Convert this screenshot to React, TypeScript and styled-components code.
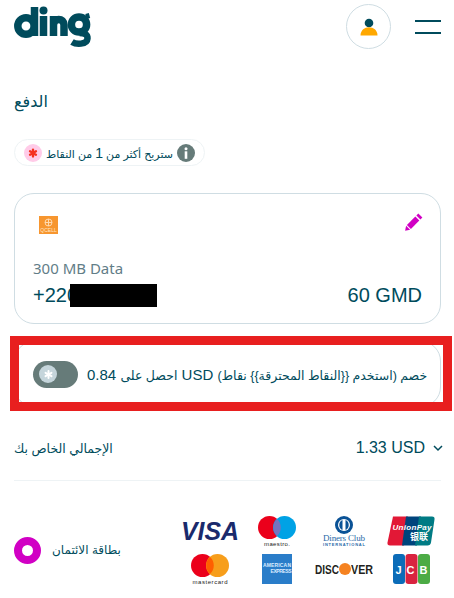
import React from 'react'
import styled, { createGlobalStyle } from 'styled-components'

const ink = '#004b5c'
const magenta = '#d100c4'

const GlobalStyle = createGlobalStyle`
  html, body {
    margin: 0;
    background: #fff;
  }
  body {
    font-family: "Liberation Sans", "DejaVu Sans", sans-serif;
    color: ${ink};
  }
`

const Page = styled.div`
  width: 454px;
  height: 598px;
  box-sizing: border-box;
  padding: 4px 13px 0 14px;
  overflow: hidden;
`

const Header = styled.header`
  height: 45px;
  display: flex;
  align-items: flex-start;
  justify-content: space-between;
`

const HeaderActions = styled.div`
  display: flex;
  align-items: center;
  gap: 24px;
`

const Avatar = styled.div`
  width: 45px;
  height: 45px;
  box-sizing: border-box;
  border: 1px solid #cfdde3;
  border-radius: 50%;
  display: flex;
  align-items: center;
  justify-content: center;
`

const Burger = styled.div`
  width: 26px;
  height: 14px;
  box-sizing: border-box;
  border-top: 2px solid ${ink};
  border-bottom: 2px solid ${ink};
`

const Title = styled.h1`
  margin: 42px 0 0;
  font-size: 16px;
  font-weight: 400;
  line-height: 22px;
`

const PointsPill = styled.div`
  margin-top: 26px;
  width: 191px;
  height: 27px;
  box-sizing: border-box;
  padding: 0 9px;
  border: 1px solid #eef3f5;
  border-radius: 14px;
  display: flex;
  align-items: center;
  justify-content: space-between;
  font-size: 11px;
  white-space: nowrap;

  b {
    font-weight: 400;
    font-size: 14px;
  }
`

const Order = styled.section`
  margin-top: 27px;
  height: 131px;
  box-sizing: border-box;
  padding: 20px 18px 0 18px;
  border: 1px solid #cfdde3;
  border-radius: 20px;
`

const OrderTop = styled.div`
  display: flex;
  justify-content: space-between;
  align-items: flex-start;
  padding-left: 6px;
`

const OperatorLogo = styled.div`
  width: 19px;
  height: 18px;
  margin-top: 2px;
  background: #f7962f;
  color: #ffe6c8;
  font-size: 5px;
  line-height: 5px;
  display: flex;
  flex-direction: column;
  align-items: center;
  justify-content: space-between;
  padding: 2px 0 1px;
  box-sizing: border-box;
`

const PencilSlot = styled.div`
  margin: -1px -1px 0 0;
  height: 18px;
`

const Product = styled.div`
  margin-top: 24px;
  font-family: "Noto Sans", sans-serif;
  font-size: 15px;
  line-height: 20px;
  color: #627d87;
`

const OrderBottom = styled.div`
  margin-top: 6px;
  display: flex;
  justify-content: space-between;
  align-items: center;
  font-size: 20px;
  line-height: 23px;
`

const Phone = styled.div`
  position: relative;
  width: 124px;
`

const Redaction = styled.span`
  position: absolute;
  left: 37px;
  top: 0;
  width: 87px;
  height: 23px;
  background: #000;
`

const DiscountWrap = styled.div`
  position: relative;
  margin-top: 17px;
`

const Discount = styled.div`
  height: 66px;
  box-sizing: border-box;
  padding: 0 21px 0 18px;
  border: 1px solid #cfdde3;
  border-radius: 20px;
  display: flex;
  align-items: center;
  gap: 9px;
`

const Highlight = styled.div`
  position: absolute;
  left: -4px;
  right: -11px;
  top: -5px;
  bottom: -4px;
  border: 9px solid #e81f1f;
  pointer-events: none;
`

const Toggle = styled.div`
  width: 45px;
  height: 27px;
  flex: none;
  border-radius: 14px;
  background: #667b79;
  display: flex;
  align-items: center;
  padding-left: 6px;
  box-sizing: border-box;
`

const Knob = styled.div`
  width: 18px;
  height: 18px;
  border-radius: 50%;
  background: #c5d5db;
  display: flex;
  align-items: center;
  justify-content: center;
`

const DiscountText = styled.div`
  flex: 1;
  direction: rtl;
  white-space: nowrap;
  font-size: 15px;
`

const ArabicRun = styled.span`
  font-size: 12.5px;
`

const Total = styled.div`
  margin-top: 30px;
  display: flex;
  justify-content: space-between;
  align-items: center;
  height: 22px;
  font-size: 12.5px;
`

const TotalAmount = styled.div`
  display: flex;
  align-items: center;
  gap: 8px;
  margin-right: -2px;
  font-size: 16px;
`

const Divider = styled.hr`
  margin: 21px 0 0;
  border: 0;
  border-top: 1px solid #eef3f5;
`

const Payment = styled.div`
  margin-top: 35px;
  display: flex;
  align-items: center;
  justify-content: space-between;
`

const Method = styled.div`
  display: flex;
  align-items: center;
  gap: 11px;
  font-size: 12px;
`

const Radio = styled.div`
  width: 27px;
  height: 27px;
  box-sizing: border-box;
  border: 8px solid ${magenta};
  border-radius: 50%;
`

const Brands = styled.div`
  display: grid;
  grid-template-columns: repeat(4, 60px);
  grid-auto-rows: 30px;
  column-gap: 7px;
  row-gap: 8px;
  justify-items: center;
  align-items: center;
`

const Asterisk = ({ size, color }: { size: number; color: string }) => (
  <svg width={size} height={size} viewBox="0 0 10 10">
    <g stroke={color} strokeWidth="2.2" strokeLinecap="round">
      <path d="M5 1.2v7.6" />
      <path d="M1.7 3.1l6.6 3.8" />
      <path d="M8.3 3.1L1.7 6.9" />
    </g>
  </svg>
)

const Logo = () => (
  <svg width="80" height="44" viewBox="0 0 80 44" fill="none" stroke={ink} strokeWidth="7.5">
    <circle cx="12" cy="22" r="8.2" />
    <path d="M20.500 3v29" />
    <path d="M29.500 12v20" />
    <circle cx="29.500" cy="6.500" r="4" fill={ink} stroke="none" />
    <path d="M39.500 32V12M39.500 21c0-7.500 10.500-7.500 10.500 0v11" />
    <circle cx="65" cy="20.500" r="7.600" />
    <path d="M72 12.500l3.500-1" strokeWidth="5" />
    <path d="M58 38c4 2.500 15 3 15.500-3.500c.3-4-3-5.500-8-5.500" strokeWidth="6.500" />
  </svg>
)

const PersonIcon = () => (
  <svg width="18" height="18" viewBox="0 0 18 18">
    <circle cx="9" cy="5" r="4.300" fill={ink} />
    <path d="M.5 17.500c0-11 17-11 17 0z" fill="#ffa800" />
  </svg>
)

const InfoIcon = () => (
  <svg width="18" height="18" viewBox="0 0 18 18">
    <circle cx="9" cy="9" r="9" fill="#667b79" />
    <circle cx="9" cy="4.800" r="1.500" fill="#fff" />
    <rect x="7.700" y="7.300" width="2.600" height="7.500" fill="#fff" />
  </svg>
)

const PinkDot = () => (
  <svg width="18" height="18" viewBox="0 0 18 18">
    <circle cx="9" cy="9" r="9" fill="#ffcbe8" />
    <g transform="translate(4.500 4.500) scale(.9)">
      <path d="M5 1.200v7.600M1.700 3.100l6.600 3.800M8.300 3.100L1.700 6.900" stroke="#f5311f" strokeWidth="2.600" strokeLinecap="round" />
    </g>
  </svg>
)

const Emblem = () => (
  <svg width="9" height="9" viewBox="0 0 9 9" fill="none" stroke="#ffd9ae" strokeWidth="1">
    <circle cx="4.500" cy="4.500" r="3.500" />
    <path d="M4.500 1v7M1 4.500h7" />
  </svg>
)

const Pencil = () => (
  <svg width="18" height="18" viewBox="0 0 18 18" fill={magenta}>
    <path d="M13.300.6l4.100 3.900-2 2-4-4z" />
    <path d="M10.300 3.600l4 4-8.400 8.300-4-4z" />
    <path d="M1.100 12.700l4 4-5 1.100z" />
  </svg>
)

const Chevron = () => (
  <svg width="10" height="7" viewBox="0 0 10 7" fill="none" stroke={ink} strokeWidth="1.500">
    <path d="M1 1l4 4 4-4" />
  </svg>
)

const Visa = () => (
  <svg width="60" height="22" viewBox="0 0 60 22">
    <text x="1" y="20" fontFamily="Liberation Sans" fontWeight="700" fontStyle="italic" fontSize="26" fill="#1a2a6c" textLength="58" lengthAdjust="spacingAndGlyphs">VISA</text>
  </svg>
)

const Maestro = () => (
  <svg width="38" height="30" viewBox="0 0 38 30">
    <circle cx="11.500" cy="11.500" r="11.500" fill="#eb001b" />
    <circle cx="26.500" cy="11.500" r="11.500" fill="#00a2e5" />
    <path d="M19 3a11.500 11.500 0 0 1 0 17a11.500 11.500 0 0 1 0-17z" fill="#7673c0" />
    <text x="19" y="29.500" textAnchor="middle" fontFamily="Liberation Sans" fontSize="6" fill="#222" textLength="26">maestro.</text>
  </svg>
)

const Diners = () => (
  <svg width="44" height="30" viewBox="0 0 44 30">
    <circle cx="22" cy="9" r="9" fill="#0a5296" />
    <circle cx="22" cy="9" r="6" fill="#fff" />
    <path d="M20.500 4a5.500 5.500 0 0 0 0 10zM23.500 4a5.500 5.500 0 0 1 0 10z" fill="#0a5296" />
    <text x="22" y="24.500" textAnchor="middle" fontFamily="Liberation Serif" fontSize="9" fill="#2a6aa8" textLength="42">Diners Club</text>
    <text x="22" y="29.500" textAnchor="middle" fontFamily="Liberation Sans" fontWeight="700" fontSize="4" fill="#2a6aa8" textLength="42">INTERNATIONAL</text>
  </svg>
)

const UnionPay = () => (
  <svg width="48" height="30" viewBox="0 0 48 30">
    <path d="M6 .5h15L17 29.500H3q-3 0-2.500-3z" fill="#e21836" />
    <path d="M19 .5h15l-4 29H15z" fill="#00447c" />
    <path d="M32 .5h13q3 0 2.500 3l-3.500 23q-.5 3-3.500 3H28z" fill="#007b84" />
    <text x="25" y="14" textAnchor="middle" fontFamily="Liberation Sans" fontWeight="700" fontStyle="italic" fontSize="8" fill="#fff" textLength="39">UnionPay</text>
    <text x="32" y="24" textAnchor="middle" fontFamily="Noto Sans CJK SC, sans-serif" fontWeight="700" fontSize="9" fill="#fff">银联</text>
  </svg>
)

const Mastercard = () => (
  <svg width="38" height="30" viewBox="0 0 38 30">
    <circle cx="11.500" cy="11.500" r="11.500" fill="#eb001b" />
    <circle cx="26.500" cy="11.500" r="11.500" fill="#f79e1b" />
    <path d="M19 3a11.500 11.500 0 0 1 0 17a11.500 11.500 0 0 1 0-17z" fill="#ff5f00" />
    <text x="19" y="29.500" textAnchor="middle" fontFamily="Liberation Sans" fontSize="6" fill="#222" textLength="35">mastercard</text>
  </svg>
)

const Amex = () => (
  <svg width="30" height="30" viewBox="0 0 30 30">
    <rect width="30" height="30" fill="#2a7dc9" />
    <text x="15" y="13" textAnchor="middle" fontFamily="Liberation Sans" fontWeight="700" fontSize="5" fill="#dcecff" textLength="28">AMERICAN</text>
    <text x="19" y="19" textAnchor="middle" fontFamily="Liberation Sans" fontWeight="700" fontSize="5" fill="#dcecff" textLength="21">EXPRESS</text>
  </svg>
)

const Discover = () => (
  <svg width="58" height="16" viewBox="0 0 58 16">
    <text x="0" y="13" fontFamily="Liberation Sans" fontWeight="700" fontSize="13" fill="#231f20" textLength="24" lengthAdjust="spacingAndGlyphs">DISC</text>
    <circle cx="30" cy="8" r="6" fill="#f58220" />
    <text x="36" y="13" fontFamily="Liberation Sans" fontWeight="700" fontSize="13" fill="#231f20" textLength="22" lengthAdjust="spacingAndGlyphs">VER</text>
  </svg>
)

const Jcb = () => (
  <svg width="37" height="30" viewBox="0 0 37 30">
    <rect x="0" y="0" width="12" height="30" rx="3" fill="#0b6cb8" />
    <rect x="12.500" y="0" width="12" height="30" rx="3" fill="#d9233f" />
    <rect x="25" y="0" width="12" height="30" rx="3" fill="#4cab45" />
    <text x="18.500" y="20" textAnchor="middle" fontFamily="Liberation Sans" fontWeight="700" fontSize="11" fill="#fff" textLength="32">JCB</text>
  </svg>
)

const App = () => {
  return (
    <Page>
      <GlobalStyle />
      <Header>
        <Logo />
        <HeaderActions>
          <Avatar>
            <PersonIcon />
          </Avatar>
          <Burger />
        </HeaderActions>
      </Header>

      <Title>الدفع</Title>

      <PointsPill>
        <PinkDot />
        <span dir="rtl">ستربح أكثر من <b>1</b> من النقاط</span>
        <InfoIcon />
      </PointsPill>

      <Order>
        <OrderTop>
          <OperatorLogo>
            <Emblem />
            QCELL
          </OperatorLogo>
          <PencilSlot>
            <Pencil />
          </PencilSlot>
        </OrderTop>
        <Product>300 MB Data</Product>
        <OrderBottom>
          <Phone>
            +220
            <Redaction />
          </Phone>
          <div>60 GMD</div>
        </OrderBottom>
      </Order>

      <DiscountWrap>
        <Discount>
          <Toggle>
            <Knob>
              <Asterisk size={9} color="#fff" />
            </Knob>
          </Toggle>
          <DiscountText>
            <ArabicRun>خصم (استخدم {'{{'}النقاط المحترقة{'}}'} نقاط)</ArabicRun> USD <ArabicRun>احصل على</ArabicRun> 0.84
          </DiscountText>
        </Discount>
        <Highlight />
      </DiscountWrap>

      <Total>
        <span dir="rtl">الإجمالي الخاص بك</span>
        <TotalAmount>
          1.33 USD
          <Chevron />
        </TotalAmount>
      </Total>

      <Divider />

      <Payment>
        <Method>
          <Radio />
          <span dir="rtl">بطاقة الائتمان</span>
        </Method>
        <Brands>
          <Visa />
          <Maestro />
          <Diners />
          <UnionPay />
          <Mastercard />
          <Amex />
          <Discover />
          <Jcb />
        </Brands>
      </Payment>
    </Page>
  )
}

export default App
